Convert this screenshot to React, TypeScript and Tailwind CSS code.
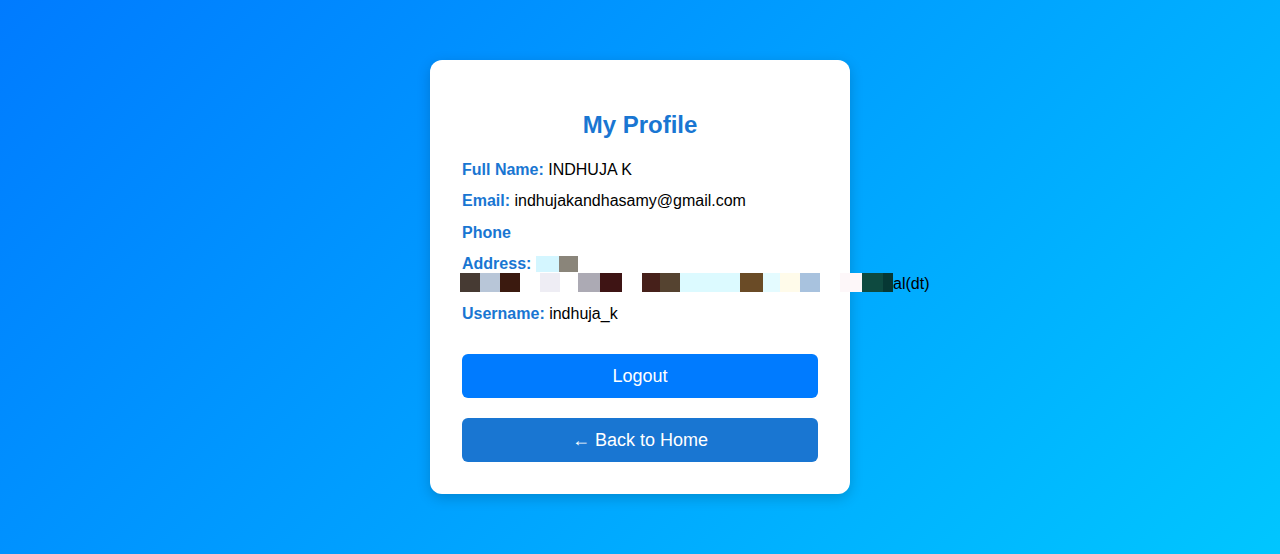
import React from "react";

const line1: [number, string][] = [
  [23, "#d4f6ff"],
  [19, "#8a857a"],
];

const line2: [number, string][] = [
  [20, "#463a33"],
  [20, "#b8c6d8"],
  [20, "#3b1a0f"],
  [20, "#ffffff"],
  [20, "#eeedf4"],
  [18, "#ffffff"],
  [22, "#acaab4"],
  [22, "#3e1414"],
  [20, "#ffffff"],
  [18, "#46201a"],
  [20, "#554330"],
  [60, "#dcfaff"],
  [23, "#6a4b26"],
  [17, "#e4fbff"],
  [20, "#fffbea"],
  [20, "#a8c2de"],
  [20, "#ffffff"],
  [22, "#fdf7f9"],
  [21, "#0e4a40"],
  [10, "#063834"],
];

function Row({ label, value, mb }: { label: string; value?: string; mb: string }) {
  return (
    <p className={`${mb} text-[16px]`}>
      <span className="font-bold text-[#1976d2]">{label}</span>
      {value ? <span className="text-black"> {value}</span> : null}
    </p>
  );
}

export default function App() {
  return (
    <div
      className="w-full h-[554px] flex items-center justify-center bg-[linear-gradient(135deg,#007bff,#00c6ff)] leading-[normal]"
      style={{ fontFamily: '"Liberation Sans", Arial, sans-serif' }}
    >
      <div className="w-[420px] bg-white rounded-xl px-8 pt-8 pb-8 shadow-[0_4px_14px_rgba(0,0,0,0.18)]">
        <h2 className="text-center text-[24px] font-bold text-[#1976d2] mt-[19px] mb-[22px]">
          My Profile
        </h2>
        <Row label="Full Name:" value="INDHUJA K" mb="mb-[13px]" />
        <Row label="Email:" value="indhujakandhasamy@gmail.com" mb="mb-[14px]" />
        <Row label="Phone" mb="mb-[13px]" />
        <p className="mb-[12px] text-[16px] text-black">
          <span className="font-bold text-[#1976d2]">Address:</span>{" "}
          {line1.map(([w, c], i) => (
            <span
              key={i}
              className="inline-block h-[16px] align-[-3px]"
              style={{ width: w, background: c }}
            />
          ))}
          <br />
          <span className="whitespace-nowrap ml-[-2px]">
            {line2.map(([w, c], i) => (
              <span
                key={i}
                className="inline-block h-[19px] align-[-3px]"
                style={{ width: w, background: c }}
              />
            ))}
            al(dt)
          </span>
        </p>
        <Row label="Username:" value="indhuja_k" mb="mb-[13px]" />
        <button className="mt-[18px] w-full h-[44px] rounded-md bg-[#007bff] text-white text-[18px]">
          Logout
        </button>
        <button className="mt-[20px] w-full h-[44px] rounded-md bg-[#1976d2] text-white text-[18px]">
          ← Back to Home
        </button>
      </div>
    </div>
  );
}
